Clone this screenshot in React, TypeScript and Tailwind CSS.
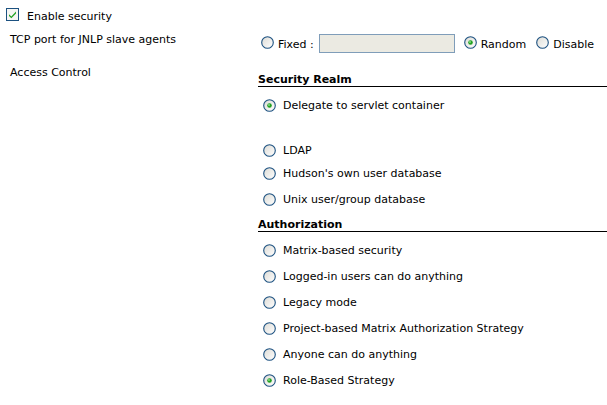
import type { ReactNode } from "react";

const font = { fontFamily: '"DejaVu Sans", Verdana, sans-serif' };

function Radio({ checked = false }: { checked?: boolean }) {
  return (
    <svg width="13" height="13" viewBox="0 0 13 13" className="shrink-0">
      <defs>
        <linearGradient id="rg" x1="0" y1="0" x2="1" y2="1">
          <stop offset="0" stopColor="#dcdbd5" />
          <stop offset="1" stopColor="#ffffff" />
        </linearGradient>
      </defs>
      <circle cx="6.5" cy="6.5" r="5.8" fill="url(#rg)" stroke="#1c5180" strokeWidth="1.1" />
      {checked && (
        <>
          <circle cx="6.5" cy="6.5" r="2.3" fill="#21a121" />
          <circle cx="6" cy="6" r="0.9" fill="#8ee08e" />
        </>
      )}
    </svg>
  );
}

function Checkbox() {
  return (
    <svg width="13" height="13" viewBox="0 0 13 13" className="shrink-0">
      <rect x="0.5" y="0.5" width="12" height="12" fill="#f6f6f3" stroke="#1c5180" />
      <path d="M3 6.2 L5.3 8.6 L10 3.6 L10 5.4 L5.3 10.3 L3 8 Z" fill="#21a121" />
    </svg>
  );
}

function Option({ label, checked, h = "h-[26px]" }: { label: string; checked?: boolean; h?: string }) {
  return (
    <div className={`flex items-center gap-[7px] pl-[5px] ${h}`}>
      <Radio checked={checked} />
      <span className="whitespace-nowrap pt-[2px]">{label}</span>
    </div>
  );
}

function Header({ children }: { children: ReactNode }) {
  return <div className="font-bold border-b border-black leading-[12px]">{children}</div>;
}

export default function App() {
  return (
    <div className="w-[607px] h-[405px] bg-white text-[11px] text-black overflow-hidden" style={font}>
      <div className="flex items-start h-[26px] pl-[6px]">
        <span className="mt-[8px]">
          <Checkbox />
        </span>
        <span className="ml-[8px] mt-[10px] leading-[14px]">Enable security</span>
      </div>

      <div className="flex">
        <div className="w-[258px] shrink-0 pl-[10px] leading-[14px]">
          <div className="pt-[7px]">TCP port for JNLP slave agents</div>
          <div className="pt-[19px]">Access Control</div>
        </div>

        <div className="flex-1">
          <div className="flex items-start h-[19px] mt-[8px] pl-[3px] whitespace-nowrap leading-[14px]">
            <span className="mt-[2px]">
              <Radio />
            </span>
            <span className="ml-[4px] mt-[4px]">Fixed :</span>
            <div className="ml-[5px] w-[136px] h-[19px] shrink-0 border border-[#7f9db9] bg-[#ebeae2]" />
            <span className="ml-[9px] mt-[2px]">
              <Radio checked />
            </span>
            <span className="ml-[4px] mt-[4px]">Random</span>
            <span className="ml-[10px] mt-[2px]">
              <Radio />
            </span>
            <span className="ml-[4px] mt-[4px]">Disable</span>
          </div>

          <div className="mt-[21px]">
            <Header>Security Realm</Header>
            <div className="mt-[5px]">
              <Option label="Delegate to servlet container" checked />
              <div className="h-[23px]" />
              <Option label="LDAP" h="h-[19px]" />
              <Option label="Hudson's own user database" />
              <Option label="Unix user/group database" />
            </div>
          </div>

          <div className="mt-[7px]">
            <Header>Authorization</Header>
            <div className="mt-[5px]">
              <Option label="Matrix-based security" />
              <Option label="Logged-in users can do anything" />
              <Option label="Legacy mode" />
              <Option label="Project-based Matrix Authorization Strategy" />
              <Option label="Anyone can do anything" />
              <Option label="Role-Based Strategy" checked />
            </div>
          </div>
        </div>
      </div>
    </div>
  );
}
